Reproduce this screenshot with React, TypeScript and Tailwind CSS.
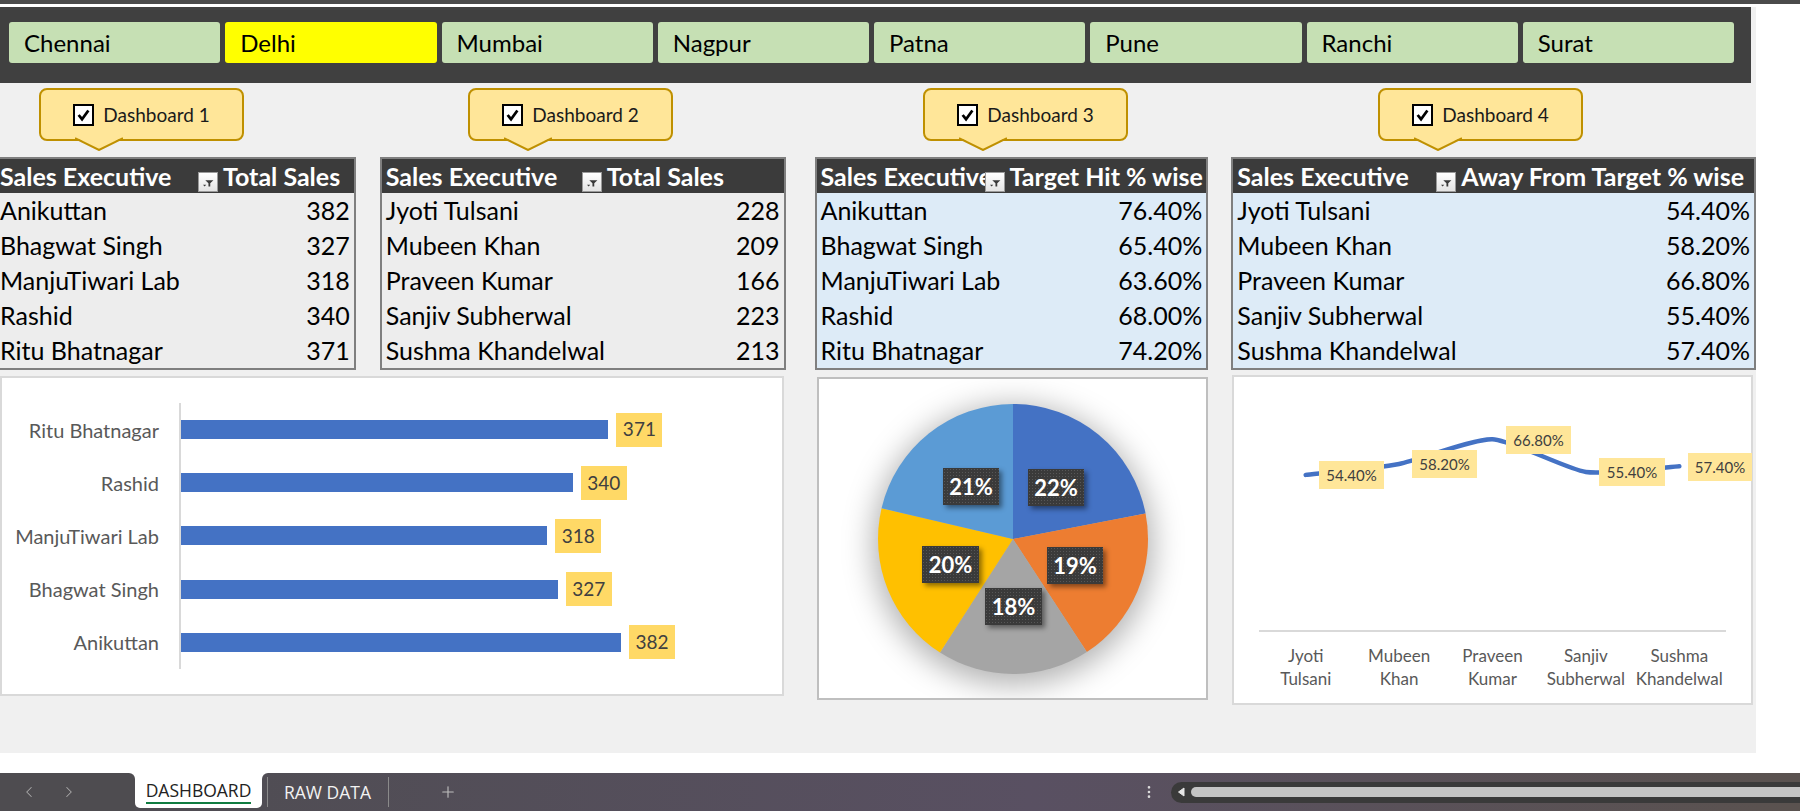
import { ChevronLeft, ChevronRight, Plus, EllipsisVertical } from "lucide-react";

type Row = [string, string];

const cities = ["Chennai", "Delhi", "Mumbai", "Nagpur", "Patna", "Pune", "Ranchi", "Surat"];

const salesA: Row[] = [
  ["Anikuttan", "382"],
  ["Bhagwat Singh", "327"],
  ["ManjuTiwari Lab", "318"],
  ["Rashid", "340"],
  ["Ritu Bhatnagar", "371"],
];
const salesB: Row[] = [
  ["Jyoti Tulsani", "228"],
  ["Mubeen Khan", "209"],
  ["Praveen Kumar", "166"],
  ["Sanjiv Subherwal", "223"],
  ["Sushma Khandelwal", "213"],
];
const hitRows: Row[] = [
  ["Anikuttan", "76.40%"],
  ["Bhagwat Singh", "65.40%"],
  ["ManjuTiwari Lab", "63.60%"],
  ["Rashid", "68.00%"],
  ["Ritu Bhatnagar", "74.20%"],
];
const awayRows: Row[] = [
  ["Jyoti Tulsani", "54.40%"],
  ["Mubeen Khan", "58.20%"],
  ["Praveen Kumar", "66.80%"],
  ["Sanjiv Subherwal", "55.40%"],
  ["Sushma Khandelwal", "57.40%"],
];

// bar chart is drawn top-down in Excel's reversed order
const bars = [
  { name: "Ritu Bhatnagar", value: 371 },
  { name: "Rashid", value: 340 },
  { name: "ManjuTiwari Lab", value: 318 },
  { name: "Bhagwat Singh", value: 327 },
  { name: "Anikuttan", value: 382 },
];

function Checkbox() {
  return (
    <span className="flex h-[22px] w-[21px] items-center justify-center border-2 border-black bg-white">
      <svg viewBox="0 0 16 16" className="h-[14px] w-[13px]">
        <path d="M2 8 L6.2 13.2 L14 2.5" fill="none" stroke="black" strokeWidth="3.4" strokeLinejoin="miter" />
      </svg>
    </span>
  );
}

function Callout({ label, className }: { label: string; className: string }) {
  return (
    <div
      className={`relative flex h-[53px] w-[205px] items-center justify-center gap-[9px] rounded-[8px] border-2 border-[#bf9000] bg-[#ffe699] ${className}`}
    >
      <Checkbox />
      <span className="text-[19px] leading-none text-[#1a1a1a]">{label}</span>
      <svg className="absolute left-[34px] top-full -mt-[2px] h-[14px] w-[48px]" viewBox="0 0 48 14">
        <polygon points="0,0 48,0 24,13" fill="#ffe699" />
        <polyline points="0,1.2 24,13 48,1.2" fill="none" stroke="#bf9000" strokeWidth="2" />
      </svg>
    </div>
  );
}

function FilterButton() {
  return (
    <span className="absolute bottom-[1px] right-[1px] flex h-[20px] w-[20px] items-end justify-center border border-[#9a9a9a] bg-gradient-to-b from-white to-[#e4e4e4]">
      <svg viewBox="0 0 20 20" className="h-[18px] w-[18px]">
        <polygon points="7,8 16,8 12.5,11.5 12.5,15 10.5,15 10.5,11.5" fill="#3a3a3a" />
        <polygon points="4.5,13 8,13 6.25,15" fill="#3a3a3a" />
      </svg>
    </span>
  );
}

function DataTable({
  className,
  col1,
  title,
  rows,
  body,
}: {
  className: string;
  col1: string;
  title: string;
  rows: Row[];
  body: string;
}) {
  return (
    <div className={`border-2 border-[#7f7f7f] ${className}`}>
      <div className="flex h-[34px] bg-[#3b3b3b] text-[25px] font-bold leading-[34px] text-white">
        <div className={`relative shrink-0 overflow-hidden whitespace-nowrap pl-[4px] ${col1}`}>
          Sales Executive
          <FilterButton />
        </div>
        <div className="overflow-hidden whitespace-nowrap pl-[4px]">{title}</div>
      </div>
      <div className={body}>
        {rows.map(([name, value]) => (
          <div key={name} className="flex h-[35px] items-center justify-between px-[4px] text-[25px] leading-[35px] text-black">
            <span>{name}</span>
            <span>{value}</span>
          </div>
        ))}
      </div>
    </div>
  );
}

function BarChart() {
  return (
    <div className="mt-[1px] flex h-[320px] w-[784px] border-2 border-[#d9d9d9] bg-white pt-[25px]">
      <div className="w-[157px] shrink-0">
        {bars.map((b) => (
          <div key={b.name} className="flex h-[53.2px] items-center justify-end whitespace-nowrap text-[20px] text-[#595959]">
            {b.name}
          </div>
        ))}
      </div>
      <div className="ml-[20px] h-[266px] border-l-2 border-[#d9d9d9]">
        {bars.map((b) => (
          <div key={b.name} className="flex h-[53.2px] items-center">
            <div className="h-[19px] bg-[#4472c4]" style={{ width: b.value * 1.152 }} />
            <div className="ml-[8px] flex h-[34px] w-[46px] items-center justify-center bg-[#ffd966] text-[19px] text-[#404040]">
              {b.value}
            </div>
          </div>
        ))}
      </div>
    </div>
  );
}

const pieValues = [76.4, 65.4, 63.6, 68.0, 74.2];
const pieColors = ["#4472c4", "#ed7d31", "#a5a5a5", "#ffc000", "#5b9bd5"];
const pieLabels = [
  { text: "22%", x: 209, y: 90, w: 56 },
  { text: "19%", x: 228, y: 168, w: 56 },
  { text: "18%", x: 166, y: 209, w: 57 },
  { text: "20%", x: 103, y: 167, w: 57 },
  { text: "21%", x: 124, y: 89, w: 56 },
];

function slicePath(cx: number, cy: number, r: number, a0: number, a1: number) {
  const p = (a: number) => [cx + r * Math.sin(a * 2 * Math.PI), cy - r * Math.cos(a * 2 * Math.PI)];
  const [x0, y0] = p(a0);
  const [x1, y1] = p(a1);
  const large = a1 - a0 > 0.5 ? 1 : 0;
  return `M${cx},${cy} L${x0},${y0} A${r},${r} 0 ${large} 1 ${x1},${y1} Z`;
}

function PieChart() {
  const total = pieValues.reduce((s, v) => s + v, 0);
  let acc = 0;
  const slices = pieValues.map((v, i) => {
    const a0 = acc / total;
    acc += v;
    return { d: slicePath(194, 160, 135, a0, acc / total), color: pieColors[i] };
  });
  return (
    <div className="relative ml-[33px] mt-[2px] h-[323px] w-[391px] border-2 border-[#bfbfbf] bg-white">
      <svg className="h-full w-full" viewBox="0 0 387 319">
        <defs>
          <filter id="pieShadow" x="-40%" y="-40%" width="180%" height="180%">
            <feGaussianBlur stdDeviation="15" />
          </filter>
        </defs>
        <circle cx="194" cy="166" r="140" fill="rgba(0,0,0,0.3)" filter="url(#pieShadow)" />
        {slices.map((s) => (
          <path key={s.color} d={s.d} fill={s.color} />
        ))}
      </svg>
      {pieLabels.map((l) => (
        <div
          key={l.text}
          className="absolute flex h-[37px] items-center justify-center bg-[#3a3a3a] bg-[radial-gradient(circle,#575757_0.7px,transparent_0.9px)] bg-[length:3px_3px] text-[22px] font-bold text-white shadow-[3px_3px_5px_rgba(0,0,0,0.45)]"
          style={{ left: l.x, top: l.y, width: l.w }}
        >
          {l.text}
        </div>
      ))}
    </div>
  );
}

const linePoints = [
  { v: 54.4, label: "54.40%", lx: 85, ly: 84, w: 65, name: ["Jyoti", "Tulsani"] },
  { v: 58.2, label: "58.20%", lx: 178, ly: 73, w: 65, name: ["Mubeen", "Khan"] },
  { v: 66.8, label: "66.80%", lx: 272, ly: 49, w: 65, name: ["Praveen", "Kumar"] },
  { v: 55.4, label: "55.40%", lx: 365, ly: 81, w: 66, name: ["Sanjiv", "Subherwal"] },
  { v: 57.4, label: "57.40%", lx: 454, ly: 76, w: 64, name: ["Sushma", "Khandelwal"] },
];

function smoothPath(pts: number[][]) {
  let d = `M${pts[0][0]},${pts[0][1]}`;
  for (let i = 0; i < pts.length - 1; i++) {
    const p0 = pts[i - 1] || pts[i];
    const p1 = pts[i];
    const p2 = pts[i + 1];
    const p3 = pts[i + 2] || p2;
    const c1 = [p1[0] + (p2[0] - p0[0]) / 10, p1[1] + (p2[1] - p0[1]) / 10];
    const c2 = [p2[0] - (p3[0] - p1[0]) / 10, p2[1] - (p3[1] - p1[1]) / 10];
    d += ` C${c1[0]},${c1[1]} ${c2[0]},${c2[1]} ${p2[0]},${p2[1]}`;
  }
  return d;
}

function LineChart() {
  const pts = linePoints.map((p, i) => [71.7 + i * 93.4, 254 - p.v * 2.87]);
  return (
    <div className="relative ml-[24px] h-[330px] w-[521px] border-2 border-[#d9d9d9] bg-white">
      <svg className="absolute inset-0 h-full w-full" viewBox="0 0 517 326">
        <line x1="25" y1="254" x2="492" y2="254" stroke="#d9d9d9" strokeWidth="2" />
        <path d={smoothPath(pts)} fill="none" stroke="#4472c4" strokeWidth="4.5" strokeLinecap="round" strokeLinejoin="round" />
      </svg>
      {linePoints.map((p) => (
        <div
          key={p.label}
          className="absolute flex h-[28px] items-center justify-center bg-[#ffe699] text-[15px] text-[#404040]"
          style={{ left: p.lx, top: p.ly, width: p.w }}
        >
          {p.label}
        </div>
      ))}
      <div className="absolute left-[25px] top-[267px] grid w-[467px] grid-cols-5 text-center text-[17px] leading-[23px] text-[#595959]">
        {linePoints.map((p) => (
          <div key={p.label} className="whitespace-nowrap">
            {p.name[0]}
            <br />
            {p.name[1]}
          </div>
        ))}
      </div>
    </div>
  );
}

function SheetTabs() {
  return (
    <div className="flex h-[38px] bg-white font-['Open_Sans',sans-serif]">
      <div className="flex w-[135px] items-center gap-[22px] rounded-tr-[6px] bg-[#4e4c50] pl-[20px] text-[#a9a9a9]">
        <ChevronLeft size={18} strokeWidth={1.4} />
        <ChevronRight size={18} strokeWidth={1.4} />
      </div>
      <div className="w-[127px] bg-[#4f4c52]">
        <div className="flex h-[35px] flex-col items-center rounded-b-[5px] bg-white pt-[7px]">
          <span className="text-[17.5px] leading-[20px] text-[#222222]">DASHBOARD</span>
          <span className="mt-[2px] h-[2px] w-[105px] bg-[#107c41]" />
        </div>
      </div>
      <div className="flex flex-1 items-center rounded-tl-[6px] bg-gradient-to-r from-[#504d54] via-[#595062] to-[#5a524f]">
        <span className="ml-[5px] h-[30px] w-px bg-[#8a8a8a]" />
        <span className="ml-[16px] text-[17.5px] text-[#f2f2f2]">RAW DATA</span>
        <span className="ml-[17px] h-[30px] w-px bg-[#8a8a8a]" />
        <Plus size={18} strokeWidth={1.5} className="ml-[50px] text-[#bdbdbd]" />
        <EllipsisVertical size={16} strokeWidth={2} className="ml-auto text-[#dcdcdc]" />
        <div className="ml-[14px] flex h-[21px] w-[629px] items-center rounded-l-full bg-[#3a3a3a] pl-[6px]">
          <svg viewBox="0 0 8 10" className="h-[10px] w-[8px]">
            <path d="M7 1 L1.5 5 L7 9 Z" fill="#e6e6e6" stroke="#e6e6e6" strokeLinejoin="round" />
          </svg>
          <div className="ml-[6px] h-[10px] flex-1 rounded-l-full bg-[#c4c4c4]" />
        </div>
      </div>
    </div>
  );
}

export default function App() {
  return (
    <div className="flex h-[811px] w-[1800px] flex-col overflow-hidden bg-white font-[Lato,sans-serif]">
      <div className="h-[4px] shrink-0 bg-[#4b4b4b]" />
      <div className="h-[3px] shrink-0 bg-white" />
      <div className="flex h-[746px] shrink-0">
        <main className="flex w-[1756px] flex-col bg-[#f0f0f0]">
          {/* city slicer */}
          <div className="grid h-[76px] w-[1751px] grid-cols-8 gap-x-[5px] bg-[#404040] pl-[9px] pr-[17px] pt-[15px]">
            {cities.map((c) => (
              <div
                key={c}
                className={`h-[41px] rounded-[3px] pl-[15px] text-[24px] leading-[41px] text-black ${
                  c === "Delhi" ? "bg-[#ffff00]" : "bg-[#c6e0b4]"
                }`}
              >
                {c}
              </div>
            ))}
          </div>

          {/* dashboard callouts */}
          <div className="mt-[5px] flex h-[65px] items-start">
            <Callout label="Dashboard 1" className="ml-[39px]" />
            <Callout label="Dashboard 2" className="ml-[224px]" />
            <Callout label="Dashboard 3" className="ml-[250px]" />
            <Callout label="Dashboard 4" className="ml-[250px]" />
          </div>

          {/* pivot tables */}
          <div className="mt-[4px] flex items-start">
            <DataTable className="-ml-[6px] w-[362px]" col1="w-[223px]" title="Total Sales" rows={salesA} body="bg-[#ededed]" />
            <DataTable className="ml-[24px] w-[406px]" col1="w-[221px]" title="Total Sales" rows={salesB} body="bg-[#ededed]" />
            <DataTable className="ml-[29px] w-[394px]" col1="w-[189px]" title="Target Hit % wise" rows={hitRows} body="bg-[#ddebf7]" />
            <DataTable className="ml-[23px] w-[525px]" col1="w-[224px]" title="Away From Target % wise" rows={awayRows} body="bg-[#ddebf7]" />
          </div>

          {/* charts */}
          <div className="mt-[5px] flex items-start">
            <BarChart />
            <PieChart />
            <LineChart />
          </div>
        </main>
        <div className="flex-1 bg-white" />
      </div>
      <div className="h-[20px] shrink-0 bg-white" />
      <SheetTabs />
    </div>
  );
}
